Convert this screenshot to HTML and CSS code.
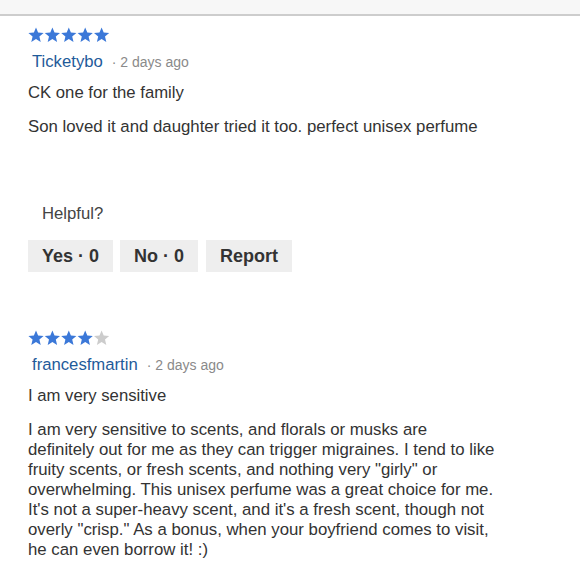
FILE: index.html
```html
<!DOCTYPE html>
<html>
<head>
<meta charset="utf-8">
<link rel="stylesheet" href="styles.css">
</head>
<body>
<div class="topbar"></div>
<div class="review">
  <svg class="stars" width="82" height="16" viewBox="0 0 82 16">
    <defs><polygon id="st" points="8,0.5 10.1,5.6 15.6,6 11.4,9.6 12.7,15 8,12.1 3.3,15 4.6,9.6 0.4,6 5.9,5.6"/></defs>
    <use href="#st" x="0" fill="#3b78d8"/>
    <use href="#st" x="16.4" fill="#3b78d8"/>
    <use href="#st" x="32.8" fill="#3b78d8"/>
    <use href="#st" x="49.2" fill="#3b78d8"/>
    <use href="#st" x="65.6" fill="#3b78d8"/>
  </svg>
  <div class="meta"><span class="author">Ticketybo</span><span class="date">· 2 days ago</span></div>
  <div class="title">CK one for the family</div>
  <p class="body">Son loved it and daughter tried it too. perfect unisex perfume</p>
  <div class="helpful">Helpful?</div>
  <div class="actions">
    <button class="btn btn-yes">Yes · 0</button>
    <button class="btn btn-no">No · 0</button>
    <button class="btn btn-report">Report</button>
  </div>
</div>
<div class="review second">
  <svg class="stars" width="82" height="16" viewBox="0 0 82 16">
    <use href="#st" x="0" fill="#3b78d8"/>
    <use href="#st" x="16.4" fill="#3b78d8"/>
    <use href="#st" x="32.8" fill="#3b78d8"/>
    <use href="#st" x="49.2" fill="#3b78d8"/>
    <use href="#st" x="65.6" fill="#cccccc"/>
  </svg>
  <div class="meta"><span class="author">francesfmartin</span><span class="date">· 2 days ago</span></div>
  <div class="title">I am very sensitive</div>
  <p class="body long">I am very sensitive to scents, and florals or musks are<br>definitely out for me as they can trigger migraines. I tend to like fruity scents, or fresh scents, and nothing very "girly" or overwhelming. This unisex perfume was a great choice for me. It's not a super-heavy scent, and it's a fresh scent, though not overly "crisp." As a bonus, when your boyfriend comes to visit, he can even borrow it! :)</p>
</div>
</body>
</html>
```
FILE: styles.css
```css
html, body {
  margin: 0;
  padding: 0;
  background: #ffffff;
}
body {
  font-family: "Liberation Sans", Arial, sans-serif;
  color: #333333;
  width: 580px;
  overflow: hidden;
}
.topbar {
  height: 14px;
  background: #f7f7f7;
  border-bottom: 2px solid #cdcdcd;
}
.review {
  padding: 11px 0 0 28px;
}
.review.second {
  padding-top: 58px;
}
.stars {
  display: block;
}
.meta {
  margin-top: 9px;
  padding-left: 4px;
  display: flex;
  align-items: baseline;
  height: 20px;
}
.author {
  font-size: 16.7px;
  color: #1f5b9a;
}
.date {
  font-size: 14px;
  color: #8a8a8a;
  margin-left: 9px;
}
.title {
  margin-top: 11px;
  font-size: 16.7px;
  line-height: 20px;
  color: #333333;
}
.body {
  margin: 14px 0 0 0;
  font-size: 16.8px;
  line-height: 20px;
  color: #333333;
}
.body.long {
  width: 480px;
}
.helpful {
  margin: 67px 0 0 14px;
  font-size: 16.7px;
  line-height: 20px;
  color: #444444;
}
.actions {
  display: flex;
  gap: 7px;
  margin-top: 16px;
}
.btn {
  border: none;
  background: #eeeeee;
  height: 32px;
  padding: 0 14px;
  font-family: "Liberation Sans", Arial, sans-serif;
  font-weight: bold;
  font-size: 18px;
  color: #333333;
}
.btn-report {
  margin-left: 1px;
}
```
